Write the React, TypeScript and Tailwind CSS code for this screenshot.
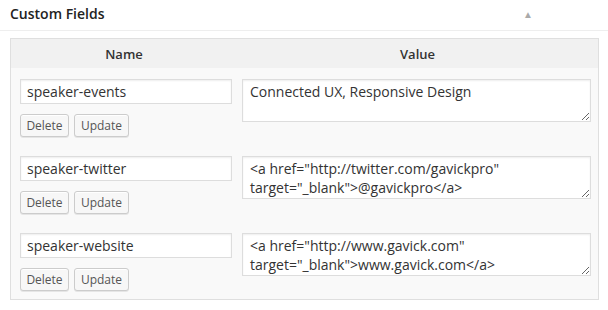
import React from "react";

const fields = [
  { name: "speaker-events", value: "Connected UX, Responsive Design" },
  {
    name: "speaker-twitter",
    value: '<a href="http://twitter.com/gavickpro" target="_blank">@gavickpro</a>',
  },
  {
    name: "speaker-website",
    value: '<a href="http://www.gavick.com" target="_blank">www.gavick.com</a>',
  },
];

const font = { fontFamily: '"Open Sans", "Noto Sans", sans-serif' };

const App: React.FC = () => {
  return (
    <div className="w-[608px] h-[310px] bg-white overflow-hidden text-[#333]" style={font}>
      {/* Box header */}
      <div className="h-[31px] flex items-center justify-between pl-[10px] pr-[75px] border-b border-[#eeeeee]">
        <h3 className="text-[14px] font-semibold text-[#222] leading-none -mt-[3px]">Custom Fields</h3>
        <span className="text-[10px] text-[#aaaaaa] leading-none -mt-[2px]">▲</span>
      </div>

      <div className="pt-[7px] px-[10px]">
        <div className="w-[589px] border border-[#dfdfdf] bg-[#f9f9f9]">
          {/* Table head */}
          <div className="grid grid-cols-[226px_1fr] h-[29px] pt-[3px] bg-[#f1f1f1] border-b border-[#f1f1f1] items-center text-[13px] font-semibold text-[#333]">
            <div className="text-center">Name</div>
            <div className="text-center">Value</div>
          </div>

          {fields.map((field) => (
            <div key={field.name} className="grid grid-cols-[226px_1fr] h-[77px] pt-[11px]">
              <div className="pl-[9px]">
                <input
                  type="text"
                  readOnly
                  defaultValue={field.name}
                  className="w-[212px] h-[25px] px-[6px] bg-white border border-[#dddddd] shadow-[inset_0_1px_2px_rgba(0,0,0,0.07)] text-[14px] text-[#333] outline-none"
                  style={font}
                />
                <div className="flex gap-[5px] mt-[10px]">
                  <button className="w-[49px] h-[23px] rounded-[3px] border border-[#cccccc] bg-[#f7f7f7] shadow-[inset_0_1px_0_#fff,0_1px_0_rgba(0,0,0,0.08)] text-[12px] text-[#555] leading-none">
                    Delete
                  </button>
                  <button className="w-[55px] h-[23px] rounded-[3px] border border-[#cccccc] bg-[#f7f7f7] shadow-[inset_0_1px_0_#fff,0_1px_0_rgba(0,0,0,0.08)] text-[12px] text-[#555] leading-none">
                    Update
                  </button>
                </div>
              </div>
              <div className="pl-[5px]">
                <textarea
                  readOnly
                  defaultValue={field.value}
                  className="block w-[349px] h-[43px] px-[7px] py-[2px] bg-white border border-[#dddddd] shadow-[inset_0_1px_2px_rgba(0,0,0,0.07)] text-[14px] leading-[19px] text-[#333] outline-none resize-y overflow-hidden"
                  style={font}
                />
              </div>
            </div>
          ))}
        </div>
      </div>
    </div>
  );
};

export default App;
